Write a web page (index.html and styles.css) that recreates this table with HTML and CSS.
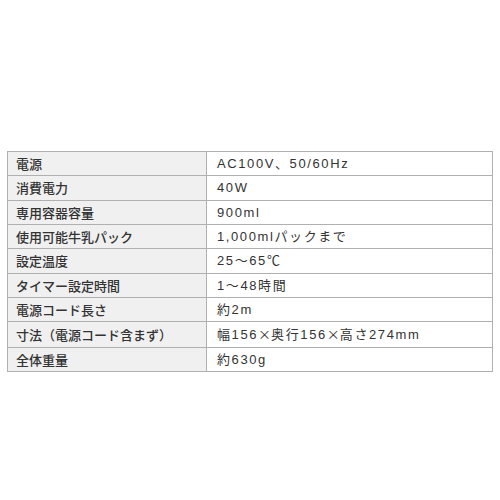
FILE: index.html
```
<!DOCTYPE html>
<html lang="ja">
<head>
<meta charset="utf-8">
<link rel="stylesheet" href="styles.css">
</head>
<body>
<div class="page">
<table class="spec">
<tr><th>電源</th><td>AC100V、50/60Hz</td></tr>
<tr><th>消費電力</th><td>40W</td></tr>
<tr><th>専用容器容量</th><td>900ml</td></tr>
<tr><th>使用可能牛乳パック</th><td>1,000mlパックまで</td></tr>
<tr><th>設定温度</th><td>25～65℃</td></tr>
<tr><th>タイマー設定時間</th><td>1～48時間</td></tr>
<tr><th>電源コード長さ</th><td>約2m</td></tr>
<tr><th>寸法（電源コード含まず）</th><td>幅156<span class="jp">×</span>奥行156<span class="jp">×</span>高さ274mm</td></tr>
<tr><th>全体重量</th><td>約630g</td></tr>
</table>
</div>
</body>
</html>
```
FILE: styles.css
```
html, body {
  margin: 0;
  padding: 0;
  background: #ffffff;
}
.page {
  width: 500px;
  height: 500px;
  padding: 151px 0 0 7px;
  box-sizing: border-box;
}
.spec {
  border-collapse: collapse;
  width: 486px;
  height: 221px;
  color: #333333;
  table-layout: fixed;
}
.spec th,
.spec td {
  border: 1px solid #b0b0b0;
  padding: 1px 0 0 0;
  vertical-align: middle;
  text-align: left;
  white-space: nowrap;
}
.spec th {
  width: 190px;
  padding-left: 8px;
  background: #f0f0f0;
  font-family: "Noto Sans CJK JP", sans-serif;
  font-weight: 500;
  font-size: 13px;
  line-height: 20px;
}
.spec td {
  padding-left: 10px;
  background: #ffffff;
  font-family: "Liberation Sans", "Noto Sans CJK JP", sans-serif;
  font-size: 13px;
  letter-spacing: 1.6px;
  line-height: 20px;
}
.jp {
  font-family: "Noto Sans CJK JP", sans-serif;
  letter-spacing: 0;
}
```
